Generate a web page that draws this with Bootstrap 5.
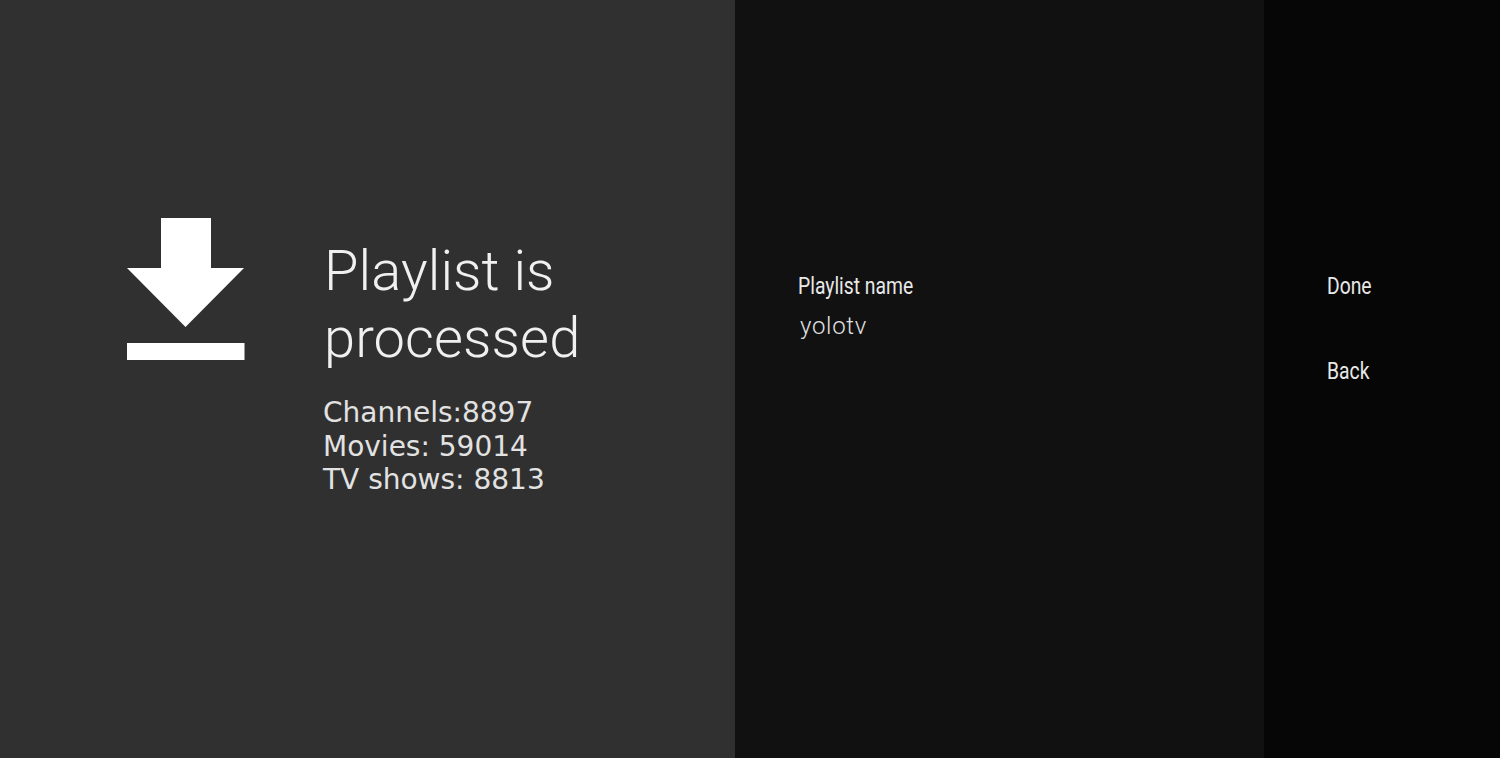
<!DOCTYPE html>
<html>
<head>
    <title>Playlist</title>
    <link href="https://cdn.jsdelivr.net/npm/bootstrap@5.3.3/dist/css/bootstrap.min.css" rel="stylesheet"/>
    <style>
        html, body { height: 100%; overflow: hidden; }
        .screen { height: 758px; color: #f1f1f1; font-family: Roboto, sans-serif; }
        .info-pane { width: 735px; background: #303030; padding: 218px 0 0 127px; }
        .form-pane { width: 529px; background: #111111; padding: 273px 0 0 63px; }
        .action-pane { flex: 1; background: #060606; padding: 273px 0 0 63px; }
        .dl-icon { width: 118px; height: 142px; flex: none; margin-right: 79px; }
        .title-text { font-weight: 300; font-size: 56px; line-height: 67px; margin: 20px 0 0; color: #f0f0f0; letter-spacing: .1px; }
        .stats { font-family: "DejaVu Sans", sans-serif; font-weight: 400; font-size: 28px; line-height: 33.5px; margin: 24px 0 0 -1px; color: #e2e2e2; }
        .narrow-label { font-size: 23px; line-height: 28px; font-weight: 400; display: block; transform: scaleX(.84); transform-origin: left center; white-space: nowrap; color: #e8e8e8; }
        .name-value { font-size: 24px; font-weight: 300; line-height: 30px; margin: 10px 0 0 2px; color: #e0e0e0; letter-spacing: .7px; }
        .action-item { margin-bottom: 57px; }
    </style>
</head>
<body>
<div class="screen d-flex">
    <div class="info-pane d-flex align-items-start">
        <svg class="dl-icon" viewBox="0 0 118 142" fill="#fff">
            <path d="M34 0H84V50H117L58.500 109L0 50H34Z"/>
            <rect x="0" y="125" width="117.500" height="17"/>
        </svg>
        <div>
            <h1 class="title-text">Playlist is<br>processed</h1>
            <div class="stats">Channels:8897<br>Movies: 59014<br>TV shows: 8813</div>
        </div>
    </div>
    <div class="form-pane">
        <span class="narrow-label">Playlist name</span>
        <div class="name-value">yolotv</div>
    </div>
    <div class="action-pane">
        <span class="narrow-label action-item">Done</span>
        <span class="narrow-label action-item">Back</span>
    </div>
</div>
<script src="https://cdn.jsdelivr.net/npm/bootstrap@5.3.3/dist/js/bootstrap.bundle.min.js"></script>
</body>
</html>
